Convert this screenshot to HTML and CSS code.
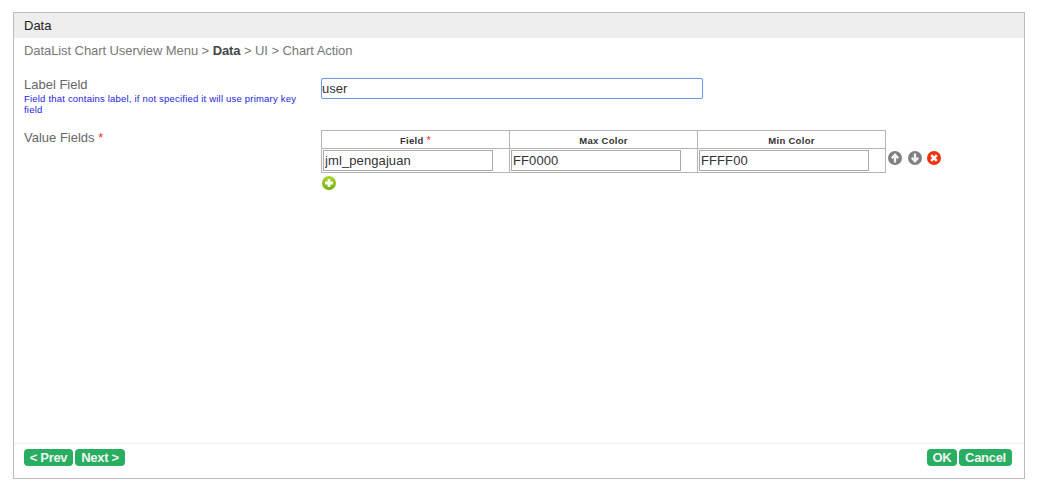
FILE: index.html
```html
<!DOCTYPE html>
<html lang="en">
<head>
<meta charset="utf-8">
<title>Data</title>
<link rel="stylesheet" href="styles.css">
</head>
<body>
<div class="panel">
  <div class="title">Data</div>
  <div class="crumbs">DataList Chart Userview Menu &gt; <strong>Data</strong> &gt; UI &gt; Chart Action</div>
  <div class="content">
    <div class="row row-label">
      <div class="label-col">
        <div class="label">Label Field</div>
        <div class="hint">Field that contains label, if not specified it will use primary key field</div>
      </div>
      <input class="text-main" type="text" value="user">
    </div>
    <div class="row">
      <div class="label-col label-value">
        <div class="label">Value Fields <span class="req">*</span></div>
      </div>
      <div class="grid-col">
        <div class="grid-line">
          <table class="grid">
            <thead>
              <tr><th>Field <span class="req">*</span></th><th>Max Color</th><th>Min Color</th></tr>
            </thead>
            <tbody>
              <tr>
                <td><input class="cell-input" type="text" value="jml_pengajuan"></td>
                <td><input class="cell-input" type="text" value="FF0000"></td>
                <td><input class="cell-input" type="text" value="FFFF00"></td>
              </tr>
            </tbody>
          </table>
          <div class="actions">
            <svg class="icon" viewBox="0 0 16 16"><circle cx="8" cy="8" r="7" fill="#808080"/><path d="M8 12.5V5.5M4.8 8.2 8 4.8 11.2 8.2" fill="none" stroke="#f4f4f4" stroke-width="2.3"/></svg>
            <svg class="icon" viewBox="0 0 16 16"><circle cx="8" cy="8" r="7" fill="#808080"/><path d="M8 3.5V10.5M4.8 7.8 8 11.2 11.2 7.8" fill="none" stroke="#f4f4f4" stroke-width="2.3"/></svg>
            <svg class="icon" viewBox="0 0 16 16"><circle cx="8" cy="8" r="7" fill="#f0300f"/><path d="M5.2 5.2l5.6 5.6M10.8 5.2l-5.6 5.6" fill="none" stroke="#fff" stroke-width="2.5"/></svg>
          </div>
        </div>
        <svg class="icon add" viewBox="0 0 16 16"><defs><linearGradient id="addfill" x1="0" y1="0" x2="0" y2="1"><stop offset="0" stop-color="#a8d82a"/><stop offset="1" stop-color="#6fae10"/></linearGradient></defs><circle cx="8" cy="8" r="7" fill="url(#addfill)"/><path d="M8 4v8M4 8h8" fill="none" stroke="#fff" stroke-width="2.8"/></svg>
      </div>
    </div>
  </div>
  <div class="footer">
    <div class="btns"><button class="btn btn-prev">&lt; Prev</button><button class="btn btn-next">Next &gt;</button></div>
    <div class="btns"><button class="btn btn-ok">OK</button><button class="btn btn-cancel">Cancel</button></div>
  </div>
</div>
</body>
</html>
```
FILE: styles.css
```css
* { box-sizing: border-box; }
html, body { height: 100%; }
body {
  margin: 0;
  padding: 12px 0 0 13px;
  background: #fff;
  font-family: "Liberation Sans", Arial, sans-serif;
  color: #666;
}
.panel {
  width: 1012px;
  height: 467px;
  border: 1px solid #bbb;
  display: flex;
  flex-direction: column;
}
.title {
  height: 25px;
  line-height: 25px;
  padding-left: 10px;
  background: #eee;
  color: #222;
  font-size: 13px;
}
.crumbs {
  height: 25px;
  line-height: 26px;
  padding-left: 10px;
  font-size: 13px;
  letter-spacing: -0.08px;
  color: #777;
}
.crumbs strong { color: #444; }
.content {
  flex: 1;
  padding: 14px 0 0 10px;
  display: flex;
  flex-direction: column;
}
.row { display: flex; align-items: flex-start; }
.row-label { height: 52px; }
.label-col { width: 297px; padding-right: 18px; }
.label-value { padding-top: 1px; }
.label { font-size: 13px; line-height: 16px; color: #666; }
.req { color: #e33; }
.hint { font-size: 9.5px; line-height: 11px; color: #1c1ce0; letter-spacing: 0.2px; }
.text-main {
  width: 382px;
  height: 21px;
  margin-top: 1px;
  padding: 0;
  border: 1px solid #6f9be0;
  border-radius: 2px;
  box-shadow: 0 0 1px #9dbcec;
  font: 13px "Liberation Sans", Arial, sans-serif;
  color: #333;
  outline: none;
}
.grid-col { display: flex; flex-direction: column; align-items: flex-start; margin-top: 1px; }
.grid-line { display: flex; align-items: flex-start; }
.grid { border-collapse: collapse; table-layout: fixed; width: 565px; }
.grid th, .grid td { border: 1px solid #b4b4b4; padding: 0; }
.grid th {
  height: 18px;
  padding-top: 2px;
  font-size: 9.5px;
  font-weight: bold;
  color: #333;
  letter-spacing: 0.3px;
  text-align: center;
}
.grid th .req { font-weight: normal; font-size: 11px; line-height: 9px; }
.grid td { height: 24px; padding: 1px 0 0 1px; vertical-align: top; }
.cell-input {
  display: block;
  width: 170px;
  height: 21px;
  padding: 0 0 0 1px;
  border: 1px solid #aaa;
  font: 13px "Liberation Sans", Arial, sans-serif;
  letter-spacing: 0.1px;
  color: #333;
  outline: none;
}
.actions { display: flex; gap: 3.5px; margin: 20px 0 0 1px; }
.icon { width: 16px; height: 16px; display: block; }
.add { margin-top: 2px; }
.footer {
  height: 35px;
  border-top: 1px solid #eee;
  padding: 5px 12px 0 10px;
  display: flex;
  justify-content: space-between;
  align-items: flex-start;
}
.btns { display: flex; gap: 2px; }
.btn {
  height: 17px;
  padding: 0;
  border: 0;
  border-radius: 4px;
  background: #27ae60;
  color: #f2f2f2;
  font: bold 13px/17px "Liberation Sans", Arial, sans-serif;
  letter-spacing: -0.3px;
  text-align: center;
}
.btn-prev { width: 49px; }
.btn-next { width: 50px; }
.btn-ok { width: 30px; }
.btn-cancel { width: 53px; }
```
